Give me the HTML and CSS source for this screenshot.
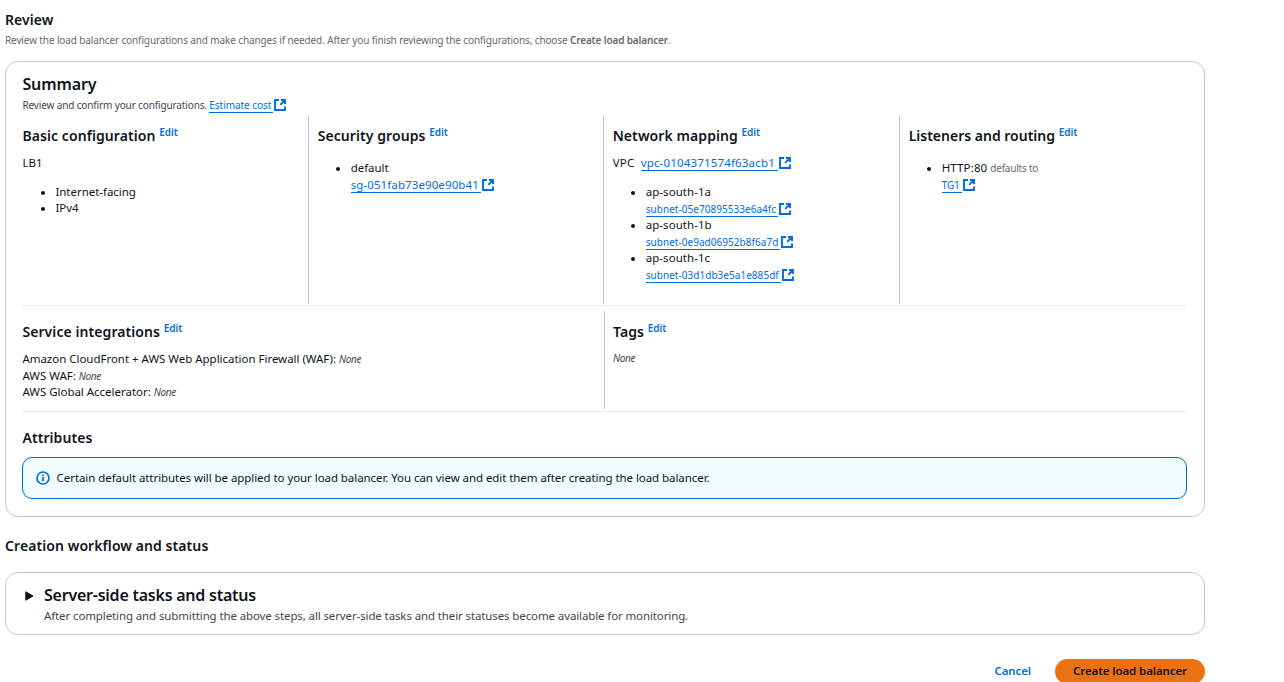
FILE: index.html
```
<!DOCTYPE html>
<html lang="en">
<head>
<meta charset="utf-8">
<title>Create load balancer - Review</title>
<link rel="stylesheet" href="styles.css">
</head>
<body>
<svg class="defs" width="0" height="0" aria-hidden="true">
  <symbol id="external" viewBox="0 0 12 12">
    <path d="M5 1H1v10h10V7.6M7 1h4v4M11 1L6.2 5.8" fill="none" stroke="currentColor" stroke-width="1.9"/>
  </symbol>
</svg>
<main class="page">
  <h2 class="title">Review</h2>
  <p class="intro">Review the load balancer configurations and make changes if needed. After you finish reviewing the configurations, choose <b>Create load balancer</b>.</p>

  <section class="card summary">
    <h2 class="card-title">Summary</h2>
    <p class="hint">Review and confirm your configurations. <a class="link cost">Estimate cost</a><svg class="ext"><use href="#external"/></svg></p>

    <div class="row four">
      <div class="col">
        <h3 class="heading">Basic configuration <a class="edit">Edit</a></h3>
        <p class="line">LB1</p>
        <ul class="list spaced basic">
          <li>Internet-facing</li>
          <li>IPv4</li>
        </ul>
      </div>
      <div class="col">
        <h3 class="heading">Security groups <a class="edit">Edit</a></h3>
        <ul class="list offset">
          <li>default<br><a class="link sg">sg-051fab73e90e90b41</a><svg class="ext"><use href="#external"/></svg></li>
        </ul>
      </div>
      <div class="col">
        <h3 class="heading">Network mapping <a class="edit">Edit</a></h3>
        <p class="line"><span class="vpc-label">VPC</span><a class="link vpc">vpc-0104371574f63acb1</a><svg class="ext"><use href="#external"/></svg></p>
        <ul class="list spaced subnets">
          <li>ap-south-1a<br><a class="link small">subnet-05e70895533e6a4fc</a><svg class="ext"><use href="#external"/></svg></li>
          <li>ap-south-1b<br><a class="link small">subnet-0e9ad06952b8f6a7d</a><svg class="ext"><use href="#external"/></svg></li>
          <li>ap-south-1c<br><a class="link small">subnet-03d1db3e5a1e885df</a><svg class="ext"><use href="#external"/></svg></li>
        </ul>
      </div>
      <div class="col">
        <h3 class="heading listeners">Listeners and routing <a class="edit">Edit</a></h3>
        <ul class="list offset">
          <li><span class="port">HTTP:80</span> <span class="muted">defaults to</span><br><a class="link small tg">TG1</a><svg class="ext"><use href="#external"/></svg></li>
        </ul>
      </div>
    </div>

    <div class="row two">
      <div class="col">
        <h3 class="heading">Service integrations <a class="edit">Edit</a></h3>
        <p class="line service">Amazon CloudFront + AWS Web Application Firewall (WAF): <i class="none">None</i></p>
        <p class="line service">AWS WAF: <i class="none">None</i></p>
        <p class="line service">AWS Global Accelerator: <i class="none">None</i></p>
      </div>
      <div class="col">
        <h3 class="heading">Tags <a class="edit">Edit</a></h3>
        <p class="line tags"><i class="none">None</i></p>
      </div>
    </div>

    <h3 class="heading attributes">Attributes</h3>
    <div class="alert">
      <svg class="info" viewBox="0 0 14 14"><circle cx="7" cy="7" r="6" fill="none" stroke="currentColor" stroke-width="1.7"/><path d="M7 6v4.3M7 3.5v1.6" stroke="currentColor" stroke-width="1.7"/></svg>
      <span>Certain default attributes will be applied to your load balancer. You can view and edit them after creating the load balancer.</span>
    </div>
  </section>

  <h2 class="title workflow">Creation workflow and status</h2>
  <section class="card tasks">
    <svg class="caret" viewBox="0 0 9 10"><path d="M.8.8L8 5 .8 9.2z" fill="currentColor" stroke="currentColor" stroke-linejoin="round"/></svg>
    <div>
      <h2 class="tasks-title">Server-side tasks and status</h2>
      <p class="tasks-text">After completing and submitting the above steps, all server-side tasks and their statuses become available for monitoring.</p>
    </div>
  </section>

  <footer class="actions">
    <a class="cancel">Cancel</a>
    <button class="create" type="button">Create load balancer</button>
  </footer>
</main>
</body>
</html>
```
FILE: styles.css
```
* { box-sizing: border-box; }
html { overflow: hidden; }
body {
  margin: 0;
  height: 682px;
  overflow: hidden;
  background: #fff;
  color: #0f141a;
  font: 11.5px/16px "Noto Sans", sans-serif;
  white-space: nowrap;
}
h2, h3, p, ul { margin: 0; padding: 0; }
.defs { display: block; }
.page { width: 1205px; padding: 10px 0 0 5px; }

.title { font-size: 14px; line-height: 20px; font-weight: 600; letter-spacing: .08px; }
.intro { margin-top: 2px; font-size: 10px; line-height: 16px; letter-spacing: -.124px; color: #656871; }
.intro b { font-weight: 600; letter-spacing: -.14px; }

.card { border: 1px solid #c6c6cd; border-radius: 13px; background: #fff; }
.summary { height: 456px; margin-top: 13px; padding: 12px 17px 0 16.4px; }
.card-title { font-size: 16px; line-height: 20px; font-weight: 600; letter-spacing: -.1px; }
.hint { height: 21px; padding-top: 3px; font-size: 10px; line-height: 16px; letter-spacing: -.135px; color: #424650; }

.link {
  color: #006ce0;
  border-bottom: 1px solid #006ce0;
  padding-right: 2px;
  letter-spacing: .1px;
}
.cost { letter-spacing: -.05px; }
.vpc { letter-spacing: .17px; padding-right: 3px; }
.small { font-size: 10px; letter-spacing: .04px; }
.tg { letter-spacing: -.1px; padding-right: 2px; }
.ext { width: 12px; height: 12px; margin-left: 1px; vertical-align: -2px; color: #006ce0; }

.row { display: grid; border-bottom: 1px solid #ebebf0; }
.four { grid-template-columns: 285.6px 295px 296px 1fr; height: 191px; padding-bottom: 1px; }
.two { grid-template-columns: 581.6px 1fr; height: 106px; padding: 5px 0 2px; }
.col + .col { border-left: 1px solid #c6c6cd; padding-left: 8.7px; }
.two .col + .col { padding-left: 8px; }
.heading { font-size: 14px; line-height: 20px; font-weight: 600; letter-spacing: .08px; }
.four .heading { padding-top: 11px; }
.two .heading { padding-top: 11px; }
.listeners { letter-spacing: 0; }
.edit { font-size: 10px; line-height: 0; vertical-align: 5px; letter-spacing: -.05px; color: #006ce0; }

.line { margin-top: 9px; padding-bottom: 4px; line-height: 16px; height: 16px; letter-spacing: 0; }
.vpc-label { display: inline-block; width: 28px; letter-spacing: .2px; }
.service { margin-top: 9px; height: 17px; letter-spacing: -.025px; }
.service + .service { height: 16px; margin-top: 0; }
.none { font-size: 10px; letter-spacing: -.35px; color: #424650; }
.tags { margin-top: 8px; line-height: 15px; }

.list { padding-left: 33px; line-height: 16.5px; letter-spacing: -.03px; }
.list li { list-style: none; position: relative; }
.list li::before {
  content: "";
  position: absolute;
  left: -14.5px;
  top: 7px;
  width: 4px;
  height: 4px;
  border-radius: 50%;
  background: #0f141a;
}
.spaced { margin-top: 13px; }
.basic { line-height: 16px; }
.offset { margin-top: 14px; }
.subnets { letter-spacing: .06px; }
.port { letter-spacing: .13px; }
.muted { font-size: 10px; line-height: 14px; letter-spacing: -.22px; color: #656871; }

.attributes { margin-top: 16px; }
.alert {
  display: flex;
  align-items: center;
  gap: 7px;
  height: 42px;
  margin-top: 9px;
  padding: 0 0 0 12.2px;
  border: 1px solid #006ce0;
  border-radius: 10px;
  background: #f0fbff;
  letter-spacing: -.065px;
}
.info { width: 14px; height: 14px; color: #006ce0; }

.workflow { margin-top: 19px; }
.tasks { display: flex; height: 63px; margin-top: 16px; padding: 12px 0 0 19px; }
.caret { width: 9px; height: 10px; margin: 6px 10px 0 0; }
.tasks-title { font-size: 16px; line-height: 20px; font-weight: 600; letter-spacing: -.233px; }
.tasks-text { margin-top: 3px; line-height: 16px; letter-spacing: -.117px; color: #424650; }

.actions { display: flex; justify-content: flex-end; align-items: center; gap: 24px; margin-top: 24px; }
.cancel { margin-top: -1px; color: #006ce0; font-weight: 600; letter-spacing: -.1px; }
.create {
  width: 150px;
  height: 25px;
  padding: 0 0 2px;
  border: 0;
  border-radius: 13px;
  background: #ec7211;
  color: #0f141a;
  font: 600 11.5px/22px "Noto Sans", sans-serif;
  letter-spacing: -.097px;
}
```
